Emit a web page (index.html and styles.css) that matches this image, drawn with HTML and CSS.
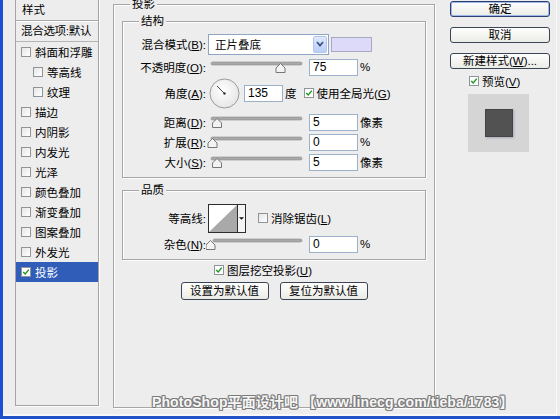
FILE: index.html
```html
<!DOCTYPE html>
<html lang="zh-CN">
<head>
<meta charset="utf-8">
<title>图层样式 - 投影</title>
<link rel="stylesheet" href="styles.css">
</head>
<body>
<div class="window">
  <div class="frame">
    <aside class="styles-panel">
      <div class="panel-head">样式</div>
      <div class="panel-blend">混合选项:默认</div>
      <ul class="fx-list">
        <li class="fx"><span class="cb"></span>斜面和浮雕</li>
        <li class="fx sub"><span class="cb"></span>等高线</li>
        <li class="fx sub"><span class="cb"></span>纹理</li>
        <li class="fx"><span class="cb"></span>描边</li>
        <li class="fx"><span class="cb"></span>内阴影</li>
        <li class="fx"><span class="cb"></span>内发光</li>
        <li class="fx"><span class="cb"></span>光泽</li>
        <li class="fx"><span class="cb"></span>颜色叠加</li>
        <li class="fx"><span class="cb"></span>渐变叠加</li>
        <li class="fx"><span class="cb"></span>图案叠加</li>
        <li class="fx"><span class="cb"></span>外发光</li>
        <li class="fx active"><span class="cb checked"><svg viewBox="0 0 10 10" width="8" height="8"><path d="M1.5 5 L4 7.5 L8.5 2" fill="none" stroke="#1f9a1f" stroke-width="1.8"/></svg></span>投影</li>
      </ul>
    </aside>

    <main class="effect">
      <div class="group outer">
        <span class="legend">投影</span>

        <div class="group struct">
          <span class="legend">结构</span>
          <div class="row r-blend">
            <span class="label">混合模式(<u>B</u>):</span>
            <div class="select"><span class="select-text">正片叠底</span><span class="select-btn"><svg viewBox="0 0 12 10" width="12" height="10"><path d="M3 3 L6 6.5 L9 3" fill="none" stroke="#3b5488" stroke-width="1.8"/></svg></span></div>
            <span class="swatch"></span>
          </div>
          <div class="row r-opacity">
            <span class="label">不透明度(<u>O</u>):</span>
            <svg class="slider" viewBox="0 0 97 14" width="97" height="14"><rect x="5" y="2" width="91" height="3" rx="1.5" fill="#a9a9a9" stroke="#8c8c8c" stroke-width="0.6"/><path d="M70 12.5 H79 V8 L74.5 3.5 L70 8 Z" fill="#f3f3f3" stroke="#777" stroke-width="1"/></svg>
            <span class="num">75</span>
            <span class="unit">%</span>
          </div>
          <div class="row r-angle">
            <span class="label">角度(<u>A</u>):</span>
            <svg class="dial" viewBox="0 0 31 31" width="31" height="31"><defs><radialGradient id="dg" cx="0.45" cy="0.4" r="0.7"><stop offset="0" stop-color="#ffffff"/><stop offset="1" stop-color="#e2e2e2"/></radialGradient></defs><circle cx="15.5" cy="15.5" r="14.5" fill="url(#dg)" stroke="#9b9b9b"/><line x1="15.5" y1="15.5" x2="8" y2="8" stroke="#444" stroke-width="1"/><circle cx="15.5" cy="15.5" r="1.2" fill="#333"/></svg>
            <span class="num short">135</span>
            <span class="unit">度</span>
            <span class="cb checked gap"><svg viewBox="0 0 10 10" width="8" height="8"><path d="M1.5 5 L4 7.5 L8.5 2" fill="none" stroke="#1f9a1f" stroke-width="1.8"/></svg></span>
            <span class="cb-text">使用全局光(<u>G</u>)</span>
          </div>
          <div class="row r-dist">
            <span class="label">距离(<u>D</u>):</span>
            <svg class="slider" viewBox="0 0 97 14" width="97" height="14"><rect x="5" y="2" width="91" height="3" rx="1.5" fill="#a9a9a9" stroke="#8c8c8c" stroke-width="0.6"/><path d="M6.5 12.5 H15.5 V8 L11 3.5 L6.5 8 Z" fill="#f3f3f3" stroke="#777" stroke-width="1"/></svg>
            <span class="num">5</span>
            <span class="unit">像素</span>
          </div>
          <div class="row r-std">
            <span class="label">扩展(<u>R</u>):</span>
            <svg class="slider" viewBox="0 0 97 14" width="97" height="14"><rect x="5" y="2" width="91" height="3" rx="1.5" fill="#a9a9a9" stroke="#8c8c8c" stroke-width="0.6"/><path d="M2 12.5 H11 V8 L6.5 3.5 L2 8 Z" fill="#f3f3f3" stroke="#777" stroke-width="1"/></svg>
            <span class="num">0</span>
            <span class="unit">%</span>
          </div>
          <div class="row r-std">
            <span class="label">大小(<u>S</u>):</span>
            <svg class="slider" viewBox="0 0 97 14" width="97" height="14"><rect x="5" y="2" width="91" height="3" rx="1.5" fill="#a9a9a9" stroke="#8c8c8c" stroke-width="0.6"/><path d="M6.5 12.5 H15.5 V8 L11 3.5 L6.5 8 Z" fill="#f3f3f3" stroke="#777" stroke-width="1"/></svg>
            <span class="num">5</span>
            <span class="unit">像素</span>
          </div>
        </div>

        <div class="group quality">
          <span class="legend">品质</span>
          <div class="row r-contour">
            <span class="label">等高线:</span>
            <div class="contour">
              <svg viewBox="0 0 28 27" width="28" height="27" preserveAspectRatio="none"><rect width="28" height="27" fill="#fff"/><path d="M0 27 L28 0 L28 27 Z" fill="#a9a9a9"/></svg>
              <span class="contour-btn"><svg viewBox="0 0 8 6" width="7" height="5"><path d="M1 1.5 H7 L4 4.5 Z" fill="#111"/></svg></span>
            </div>
            <span class="cb aa"></span>
            <span class="cb-text">消除锯齿(<u>L</u>)</span>
          </div>
          <div class="row r-noise">
            <span class="label">杂色(<u>N</u>):</span>
            <svg class="slider" viewBox="0 0 97 14" width="97" height="14"><rect x="7" y="2" width="89" height="3" rx="1.5" fill="#a9a9a9" stroke="#8c8c8c" stroke-width="0.6"/><path d="M0 12.5 H9 V8 L4.5 3.5 L0 8 Z" fill="#f3f3f3" stroke="#777" stroke-width="1"/></svg>
            <span class="num">0</span>
            <span class="unit">%</span>
          </div>
        </div>

        <div class="knockout">
          <span class="cb checked"><svg viewBox="0 0 10 10" width="8" height="8"><path d="M1.5 5 L4 7.5 L8.5 2" fill="none" stroke="#1f9a1f" stroke-width="1.8"/></svg></span>
          <span class="cb-text">图层挖空投影(<u>U</u>)</span>
        </div>
        <div class="defaults">
          <button class="btn wide">设置为默认值</button>
          <button class="btn wide">复位为默认值</button>
        </div>
      </div>
    </main>

    <div class="actions">
      <button class="btn action default">确定</button>
      <button class="btn action">取消</button>
      <button class="btn action">新建样式(<u>W</u>)...</button>
      <div class="preview-toggle">
        <span class="cb checked"><svg viewBox="0 0 10 10" width="8" height="8"><path d="M1.5 5 L4 7.5 L8.5 2" fill="none" stroke="#1f9a1f" stroke-width="1.8"/></svg></span>
        <span class="cb-text">预览(<u>V</u>)</span>
      </div>
      <div class="preview"><span class="preview-square"></span></div>
    </div>
  </div>
  <div class="watermark">PhotoShop平面设计吧 【www.linecg.com/tieba/1783】</div>
</div>
</body>
</html>
```

FILE: styles.css
```css
* { box-sizing: border-box; }

html, body {
  margin: 0;
  padding: 0;
  background: #ededed;
}

body {
  font-family: "Liberation Sans", "Noto Sans CJK SC", sans-serif;
  font-size: 11.5px;
  color: #000;
}

u { text-decoration: underline; text-underline-offset: 1px; }

.window {
  position: relative;
  width: 560px;
  height: 419px;
  overflow: hidden;
  background: #ededed;
  border-left: 3px solid #1d4fd0;
  border-bottom: 3px solid #2252c8;
}

.frame {
  display: flex;
  align-items: flex-start;
  height: 100%;
  padding-left: 12px;
  border-bottom: 2px solid #f8f8f8;
  border-right: 1px solid #fafafa;
  margin-right: 3px;
}

/* ---------- left styles list ---------- */
.styles-panel {
  width: 84px;
  height: 407px;
  margin-top: -1px;
  border: 1px solid #a5a5a5;
  box-shadow: 1px 1px 0 #fbfbfb;
  background: #ededed;
}

.panel-head {
  height: 21px;
  line-height: 20px;
  padding-left: 6px;
  border-bottom: 1px solid #a9a9a9;
  box-shadow: 0 1px 0 #fff;
}

.panel-blend {
  height: 21px;
  line-height: 20px;
  padding-left: 5px;
  white-space: nowrap;
  letter-spacing: -0.3px;
  border-bottom: 1px solid #b5b5b5;
}

.fx-list {
  list-style: none;
  margin: 0;
  padding: 0;
}

.fx {
  display: flex;
  align-items: center;
  height: 20px;
  padding-left: 5px;
  white-space: nowrap;
}

.fx.sub { padding-left: 17px; }

.fx.active {
  background: #2f5db7;
  color: #fff;
}

.fx .cb { margin-right: 4px; }

.cb {
  display: inline-flex;
  align-items: center;
  justify-content: center;
  width: 10px;
  height: 10px;
  flex: none;
  background: linear-gradient(135deg, #e6e6e6, #ffffff);
  border: 1px solid #8f9499;
}

.cb.checked { background: #fff; }

/* ---------- middle effect panel ---------- */
.effect {
  margin-left: 14px;
}

.group {
  position: relative;
  border: 1px solid #a6a6a6;
  box-shadow: 1px 1px 0 #fdfdfd, inset 1px 1px 0 #fdfdfd;
}

.legend {
  position: absolute;
  top: -9px;
  left: 16px;
  padding: 0 2px;
  line-height: 16px;
  background: #ededed;
}

.outer {
  width: 322px;
  height: 404px;
  margin-top: 4px;
  padding: 0 8px;
}

.struct {
  margin-top: 16px;
  padding: 11px 0 5px;
}

.quality {
  margin-top: 12px;
  padding: 13px 0 6px;
}

.row {
  display: flex;
  align-items: center;
  white-space: nowrap;
}

.r-blend { height: 22px; }
.r-opacity { height: 22px; margin-top: 1px; }
.r-angle { height: 30px; }
.r-dist { height: 20px; margin-top: 4px; }
.r-std { height: 20px; }
.r-contour { height: 28px; }
.r-noise { height: 18px; margin-top: 3px; }

.label {
  width: 83px;
  flex: none;
  text-align: right;
}

.select {
  display: flex;
  align-items: center;
  width: 121px;
  height: 21px;
  margin-left: 2px;
  padding: 1px;
  background: #fff;
  border: 1px solid #8fa5c2;
}

.select-text {
  flex: 1;
  padding-left: 5px;
}

.select-btn {
  display: flex;
  align-items: center;
  justify-content: center;
  width: 14px;
  height: 17px;
  background: linear-gradient(#dfe8fd, #b9cdf6);
  border: 1px solid #b2c5ec;
  border-radius: 2px;
}

.swatch {
  width: 41px;
  height: 15px;
  margin-left: 2px;
  background: #dcdaf8;
  border: 1px solid #a8a8c0;
}

.slider {
  flex: none;
  display: block;
}

.num {
  width: 49px;
  height: 17px;
  margin-left: 6px;
  padding-left: 3px;
  line-height: 15px;
  background: #fff;
  border: 1px solid #9cb0c9;
  font-size: 12px;
}

.num.short {
  width: 39px;
  margin-left: 4px;
}

.unit { margin-left: 2px; }

.dial {
  flex: none;
  display: block;
  margin-left: 3px;
}

.cb.gap { margin-left: 7px; }

.cb-text { margin-left: 3px; }

.contour {
  display: flex;
  width: 38px;
  height: 29px;
  margin-left: 2px;
  border: 1px solid #2d2d2d;
  background: #fff;
}

.contour svg { display: block; }

.contour-btn {
  display: flex;
  align-items: center;
  justify-content: center;
  width: 8px;
  border-left: 1px solid #2d2d2d;
  background: #f4f4f4;
}

.cb.aa { margin-left: 12px; }

.knockout {
  display: flex;
  align-items: center;
  height: 16px;
  margin-top: 2px;
  margin-left: 92px;
}

.defaults {
  display: flex;
  justify-content: center;
  gap: 11px;
  margin-top: 4px;
}

.btn {
  font-family: "Liberation Sans", "Noto Sans CJK SC", sans-serif;
  font-size: 11.5px;
  color: #000;
  padding: 0;
  background: linear-gradient(#fefefe, #ebebe6);
  border: 1px solid #3b4556;
  border-radius: 3px;
  line-height: 14px;
}

.btn.wide {
  width: 88px;
  height: 18px;
}

/* ---------- right actions ---------- */
.actions {
  display: flex;
  flex-direction: column;
  width: 100px;
  margin-left: 15px;
  padding-top: 1px;
}

.btn.action {
  width: 100px;
  height: 16px;
  margin-bottom: 10px;
}

.btn.default {
  border-color: #2c3f70;
  box-shadow: inset 0 0 0 1px #9db8ea;
}

.preview-toggle {
  display: flex;
  align-items: center;
  height: 14px;
  margin-top: -5px;
  padding-left: 19px;
}

.preview {
  display: flex;
  align-items: center;
  justify-content: center;
  width: 61px;
  height: 58px;
  margin-top: 6px;
  margin-left: 18px;
  background: #d5d5d5;
}

.preview-square {
  width: 28px;
  height: 28px;
  background: #525252;
  border: 1px solid #444;
  box-shadow: 1px 1px 2px rgba(80, 80, 140, 0.35);
}

/* ---------- watermark ---------- */
.watermark {
  position: absolute;
  left: 149px;
  top: 391px;
  font-family: "Liberation Sans", "Noto Sans CJK SC", sans-serif;
  font-weight: bold;
  font-size: 14px;
  letter-spacing: 0.1px;
  color: #f6f6f6;
  white-space: nowrap;
  text-shadow: 1px 0 0 #7a7a7a, -1px 0 0 #7a7a7a, 0 1px 0 #7a7a7a, 0 -1px 0 #7a7a7a, 1px 1px 0 #8a8a8a, -1px -1px 0 #8a8a8a, 1px -1px 0 #8a8a8a, -1px 1px 0 #8a8a8a;
}
```
